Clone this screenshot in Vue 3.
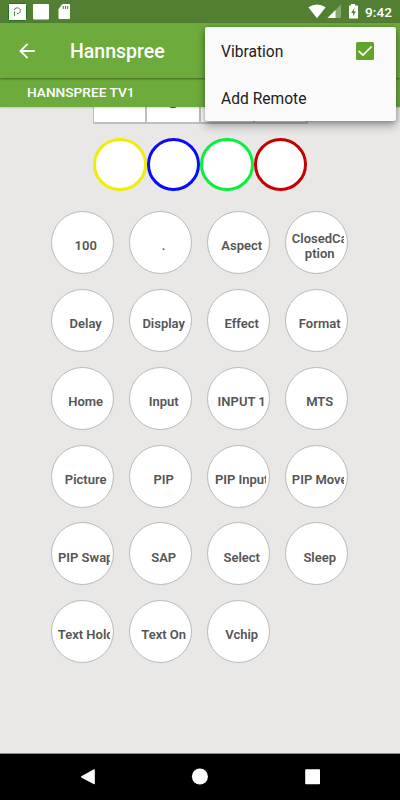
<script setup>
import { ref } from 'vue'

const vibration = ref(true)

const colors = ['#f0ec0c', '#0a0aff', '#0cee3c', '#c60000']

const keys = [
  '100', '.', 'Aspect', 'ClosedCa\nption',
  'Delay', 'Display', 'Effect', 'Format',
  'Home', 'Input', 'INPUT 1', 'MTS',
  'Picture', 'PIP', 'PIP Input', 'PIP Move',
  'PIP Swap', 'SAP', 'Select', 'Sleep',
  'Text Hold', 'Text On', 'Vchip',
]
</script>

<template>
  <div class="screen">
    <div class="status-bar">
      <svg class="notifications" width="80" height="23" viewBox="0 0 80 23">
        <rect x="8.5" y="3.5" width="18" height="17" rx="1" fill="#fff" stroke="#23751c" />
        <path d="M14.6 15.8V11.5M14.4 10C14.8 7.6 17.2 7.6 18.7 8.2C21.5 9.4 20.8 13.8 17 13.6" fill="none" stroke="#477b3a" stroke-width="1" />
        <rect x="33" y="4" width="16" height="15.5" rx="1" fill="#fff" />
        <path d="M62.5 4H69Q70 4 70 5V18Q70 19 69 19H59.5Q58.5 19 58.5 18V9Z" fill="#fff" />
        <path d="M63.3 6V9M65.5 6V9M67.7 6V9" stroke="#527f31" stroke-width="1.1" />
      </svg>
      <svg class="system" width="54" height="23" viewBox="0 0 54 23">
        <path d="M.3 7.3Q9 1.5 17.7 7.3L9 18.3Z" fill="#fff" />
        <path d="M33 4.5V18H19.5Z" fill="#86a86d" />
        <path d="M27.5 10V18H19.5Z" fill="#fff" />
        <path d="M43 4H47V5.5H50V18.5H41V5.5H43Z" fill="#fff" />
        <path d="M46.5 7.8L43.2 13H45.3L44.8 16.6L48 11.5H46Z" fill="#527f31" />
      </svg>
      <span class="clock">9:42</span>
    </div>

    <header class="app-bar">
      <svg width="16" height="16" viewBox="0 0 16 16">
        <path d="M15.8 8H1.5M8.6 .8L1.4 8L8.6 15.2" fill="none" stroke="#fff" stroke-width="1.8" />
      </svg>
      <h1>Hannspree</h1>
    </header>
    <div class="tab">HANNSPREE TV1</div>

    <main class="remote">
      <div class="pad">
        <div v-for="n in 4" :key="n" class="pad-cell">
          <span v-if="n === 2" class="pad-dot"></span>
        </div>
      </div>
      <div class="colors">
        <button v-for="c in colors" :key="c" class="color-key" :style="{ borderColor: c }"></button>
      </div>
      <div class="keys">
        <button v-for="k in keys" :key="k" class="key">
          <span class="clip"><span class="label">{{ k }}</span></span>
        </button>
      </div>
    </main>

    <nav class="nav-bar">
      <svg width="400" height="46" viewBox="0 0 400 46">
        <path d="M81.3 22.2L94 15.2Q94.8 15 94.8 16V29.5Q94.8 30.5 94 30.2L81.3 23.6Q80.5 22.9 81.3 22.2Z" fill="#fff" />
        <circle cx="199.9" cy="22.5" r="8" fill="#fff" />
        <rect x="305.2" y="15.2" width="14.8" height="15" rx=".8" fill="#fff" />
      </svg>
    </nav>

    <!-- Overflow menu -->
    <div class="menu">
      <div class="menu-item" @click="vibration = !vibration">
        <span>Vibration</span>
        <span class="checkbox">
          <svg v-if="vibration" width="18" height="18" viewBox="0 0 18 18">
            <path d="M2.5 8.8L7 13.1L15.6 4.5" fill="none" stroke="#fff" stroke-width="1.7" />
          </svg>
        </span>
      </div>
      <div class="menu-item">Add Remote</div>
    </div>
  </div>
</template>

<style>
body { background: #e9e8e6; }
</style>

<style scoped>
.screen {
  position: relative;
  display: flex;
  flex-direction: column;
  width: 400px;
  height: 800px;
  overflow: hidden;
  background: #e9e8e6;
  font-family: Roboto, sans-serif;
}
.status-bar {
  display: flex;
  align-items: center;
  height: 23px;
  flex: none;
  background: #527f31;
  color: #fff;
}
.system { margin-left: auto; }
.clock {
  width: 27px;
  margin: 0 8px 0 3px;
  font-size: 13.7px;
  font-weight: 500;
  line-height: 20px;
  text-align: center;
  white-space: nowrap;
}
.app-bar {
  position: relative;
  z-index: 2;
  display: flex;
  align-items: center;
  gap: 35px;
  box-sizing: border-box;
  height: 55px;
  flex: none;
  padding-left: 19px;
  background: #6dab3c;
  color: #fff;
  box-shadow: 0 1px 2px rgba(0,0,0,0.4);
}
.app-bar h1 {
  margin: 2px 0 0;
  font-size: 19.5px;
  font-weight: 500;
  line-height: 24px;
}
.tab {
  position: relative;
  z-index: 1;
  box-sizing: border-box;
  height: 29px;
  flex: none;
  padding-left: 27px;
  background: #6dab3c;
  color: #fff;
  font-size: 13.7px;
  font-weight: 500;
  line-height: 28px;
  box-shadow: 0 1px 2px rgba(0,0,0,0.15);
}
.remote {
  flex: 1;
  display: flex;
  flex-direction: column;
  box-sizing: border-box;
  border-bottom: 1px solid #8d8d8c;
}
.pad {
  display: flex;
  gap: 2px;
  width: 215px;
  box-sizing: border-box;
  height: 16.5px;
  margin-left: 92.5px;
  padding: 0 1.3px 1.5px;
  background: #bebebe;
}
.pad-cell {
  flex: 1;
  background: #fff;
  overflow: hidden;
}
.pad-dot {
  display: block;
  width: 8px;
  height: 5px;
  margin: -4px auto 0;
  border-radius: 0 0 50% 50%;
  background: #a80f0f;
}
.colors {
  display: flex;
  margin: 14px 0 0 93px;
}
.color-key {
  box-sizing: border-box;
  width: 53.6px;
  height: 53.6px;
  padding: 0;
  border: 3px solid;
  border-radius: 50%;
  background: #fff;
}
.keys {
  display: grid;
  grid-template-columns: repeat(4, 63px);
  column-gap: 15px;
  row-gap: 14.8px;
  margin: 20.2px 0 0 51.4px;
}
.key {
  display: flex;
  align-items: center;
  box-sizing: border-box;
  width: 63px;
  height: 63px;
  padding: 6.4px 0 0 5.8px;
  border: 1px solid #b9b9b9;
  border-radius: 50%;
  background: #fff;
  color: #555;
  font-family: inherit;
  font-size: 13px;
  font-weight: 600;
}
.clip {
  width: 51.5px;
  overflow: hidden;
}
.label {
  display: flex;
  justify-content: center;
  width: 55px;
  line-height: 15px;
  text-align: center;
  white-space: pre;
}
.nav-bar {
  height: 46px;
  flex: none;
  background: #000;
}
.menu {
  position: absolute;
  z-index: 10;
  top: 27px;
  left: 205px;
  width: 191px;
  height: 94px;
  border-radius: 2px;
  background: #fafafa;
  color: #212121;
  box-shadow: 0 5px 10px rgba(0,0,0,0.3), 0 1px 4px rgba(0,0,0,0.25);
}
.menu-item {
  display: flex;
  align-items: center;
  justify-content: space-between;
  height: 47px;
  padding: 2px 22px 0 16px;
  box-sizing: border-box;
  font-size: 15.6px;
}
.checkbox {
  width: 18px;
  height: 18px;
  margin-bottom: 2px;
  border-radius: 1.5px;
  background: #60a527;
}
.checkbox svg { display: block; }
</style>
